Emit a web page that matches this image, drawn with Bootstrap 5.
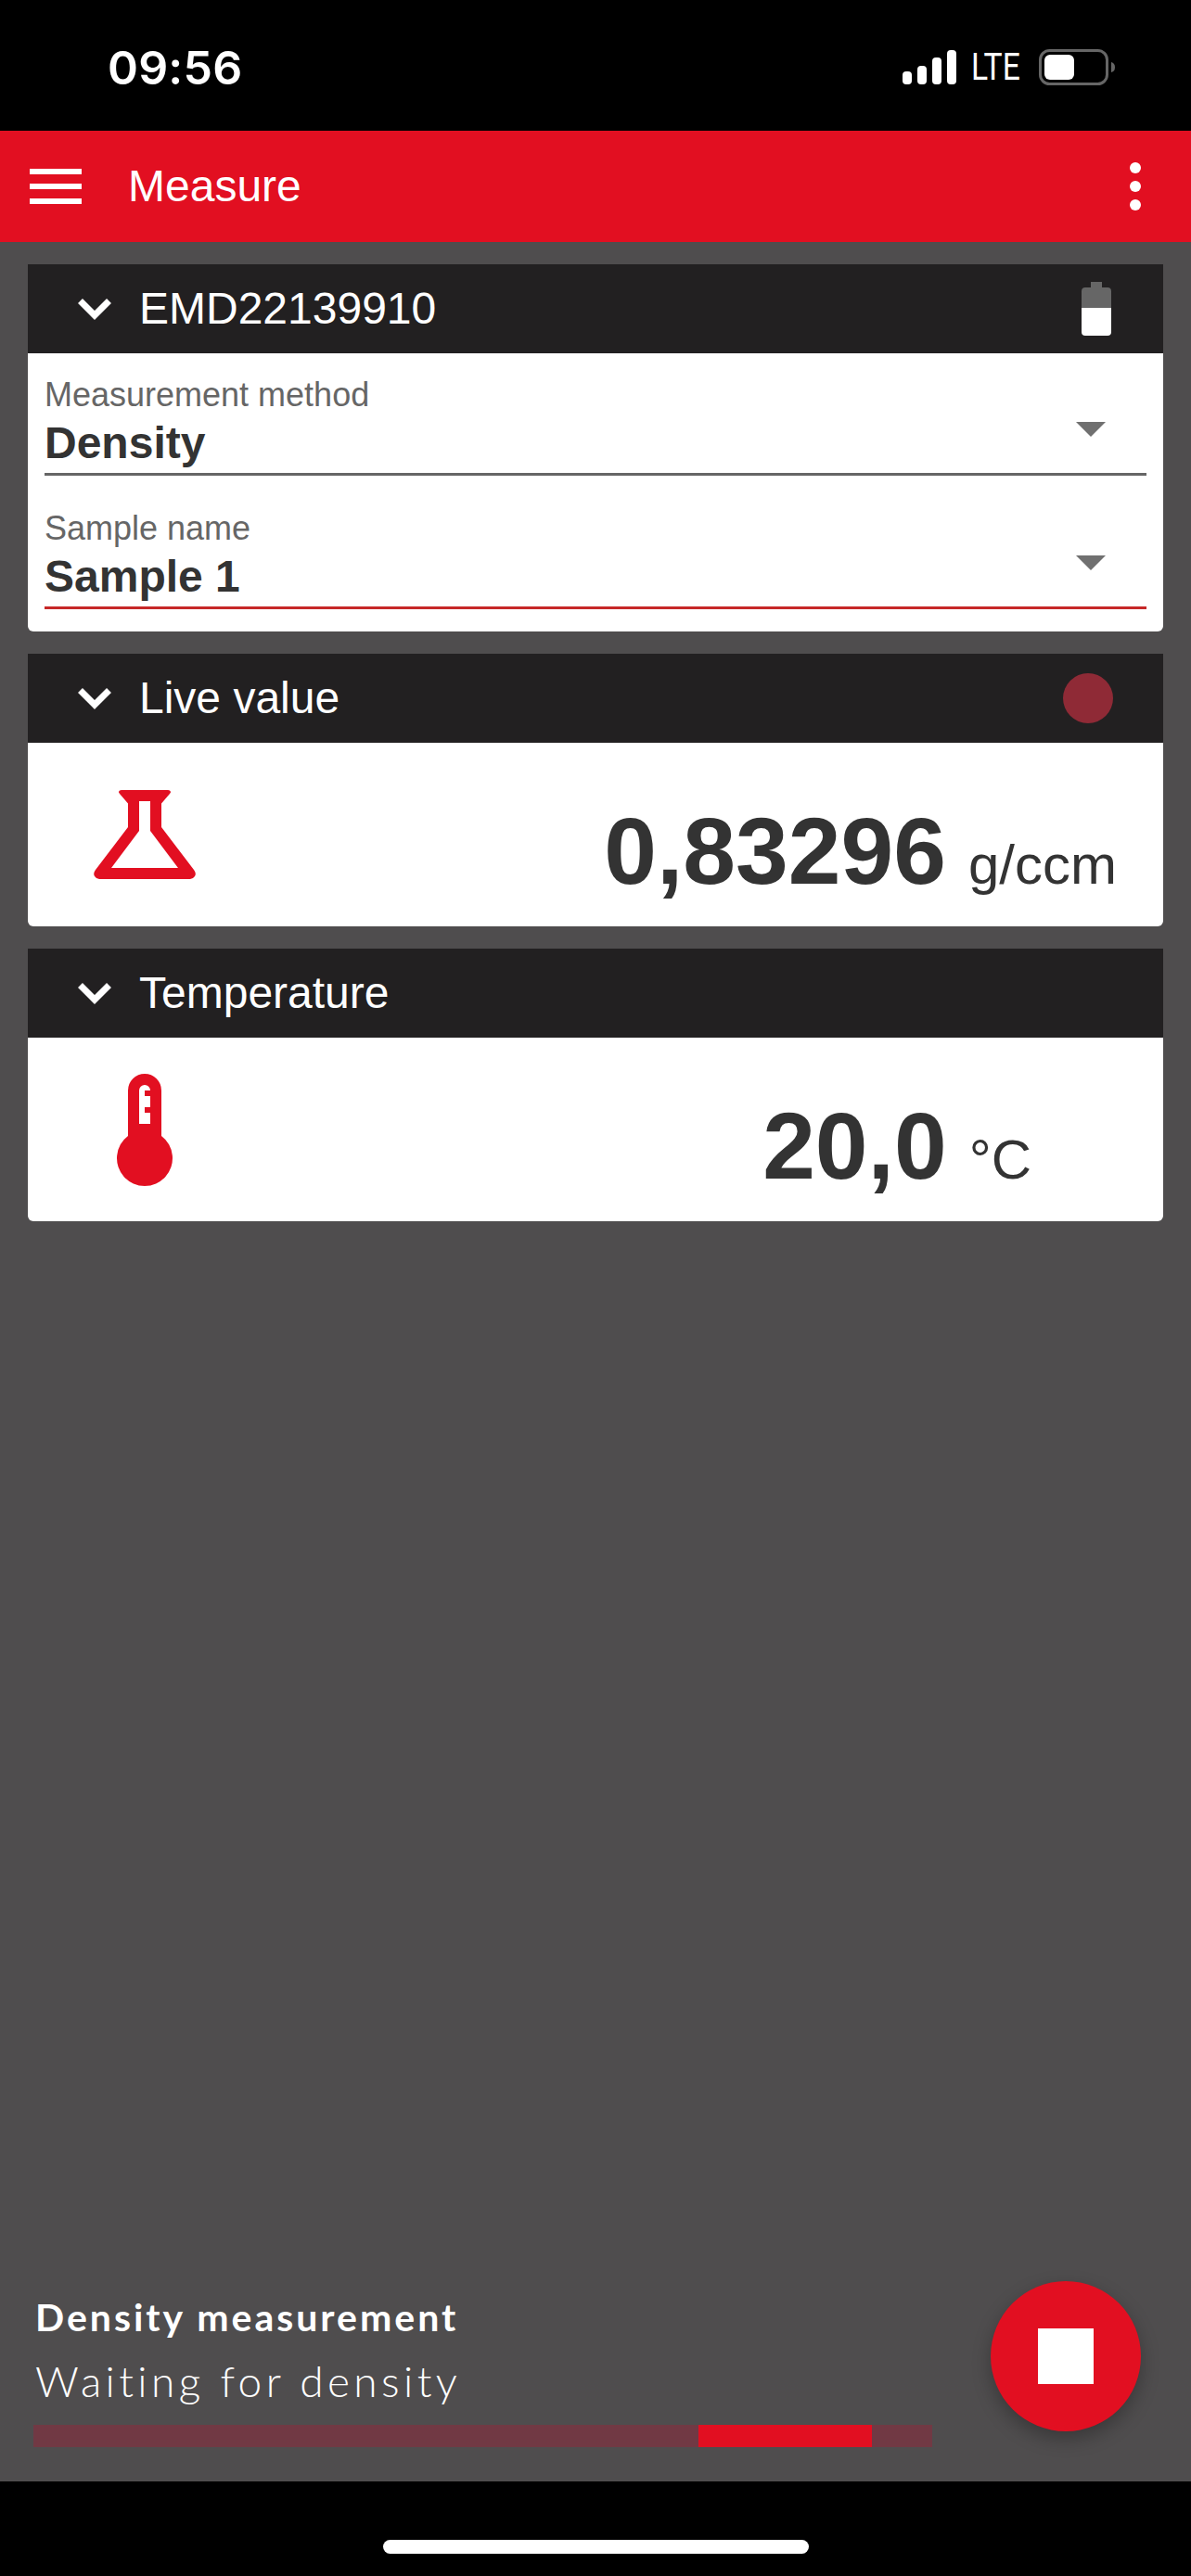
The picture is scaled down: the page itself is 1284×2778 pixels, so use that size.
<!doctype html>
<html lang="en"><head>
<meta charset="utf-8"/><meta name="viewport" content="width=device-width,initial-scale=1"/>
<title>Measure</title>
<link href="https://cdn.jsdelivr.net/npm/bootstrap@5.3.2/dist/css/bootstrap.min.css" rel="stylesheet">
<style>
body{background:#000;font-family:"Liberation Sans",Arial,sans-serif;color:#333}
.phone-status{height:141px;background:#000;color:#fff;padding:0 82px 0 116px}
.clock{font-family:Inter,sans-serif;font-weight:600;font-size:50px;line-height:1;margin-top:5px;letter-spacing:.2px}
.lte-box{width:57px;height:41px}
.lte{display:inline-block;font-family:Roboto,sans-serif;font-weight:400;font-size:41px;line-height:1;transform:scaleX(.82);transform-origin:left center}
.status-icons{gap:16px;margin-top:4px}
.app-bar{height:120px;background:#e20f21;padding:0 32px;color:#fff}
.app-title{font-size:48px;line-height:56px;margin-left:50px}
.burger{width:56px;height:38px;display:flex;flex-direction:column;justify-content:space-between}
.burger span{display:block;height:6px;background:#fff}
.kebab{display:flex;flex-direction:column;gap:8px;margin-right:22px;margin-left:auto}
.kebab span{display:block;width:12px;height:12px;border-radius:50%;background:#fff}
.content-area{background:#4f4d4e;padding:24px 30px 0;gap:24px;flex:1 1 auto}
.panel{border:0;border-radius:6px;background:#fff;color:#333}
.panel-head{height:96px;background:#222021;color:#fff;border:0;border-radius:0!important;padding:0 54px;font-size:48px;line-height:56px}
.panel-head .chev{margin-right:30px;flex:none}
.cell-icon{margin-right:2px}
.panel-body-form{padding:24px 18px}
.field{height:108px;border-bottom:3px solid #666;position:relative}
.field + .field{margin-top:36px}
.field.is-active{border-bottom-color:#c62828}
.field-label{font-size:36px;line-height:36px;color:#666;padding-top:3px}
.field-value{font-size:48px;line-height:56px;font-weight:700;color:#333;margin-top:6px}
.caret-down{position:absolute;right:44px;top:50px;width:0;height:0;border-left:16px solid transparent;border-right:16px solid transparent;border-top:16px solid #707070}
.live-dot{width:54px;height:54px;border-radius:50%;background:#8f2a36}
.reading{height:198px;padding:0 50px 30px 0}
.reading-temp{padding-right:142px}
.reading-num{font-size:102px;line-height:1;font-weight:700}
.reading-unit{font-size:60px;line-height:1;margin-left:24px}
.bottom-zone{position:relative;background:#4f4d4e;height:282px;padding:81px 36px 0}
.job-title{font-family:Lato,sans-serif;font-weight:700;font-size:41px;line-height:48px;letter-spacing:3px;color:#fff;padding-left:2px}
.job-state{font-family:Lato,sans-serif;font-weight:300;font-size:46px;line-height:54px;letter-spacing:4.400px;color:#fff;padding-left:2px;margin-top:18px}
.job-bar{width:969px;height:24px;border-radius:0;background:#713944;margin-top:20px}
.job-bar .progress-bar{background:#e20f21}
.stop-fab{position:absolute;left:1068px;top:66px;width:162px;height:162px;border-radius:50%;background:#e20f21;border:0;padding:0;box-shadow:0 8px 20px rgba(0,0,0,.28)}
.stop-fab span{display:block;width:60px;height:60px;background:#fff;margin:0 auto}
.home-zone{height:102px;background:#000;padding-top:63px}
.home-pill{width:459px;height:15px;border-radius:8px;background:#fff}
</style>
</head><body>
<div class="d-flex flex-column min-vh-100">

  <div class="phone-status d-flex align-items-center justify-content-between">
    <div class="clock">09:56</div>
    <div class="status-icons d-flex align-items-center">
      <svg width="58" height="37" viewBox="0 0 58 37" fill="#fff"><rect x="0" y="23" width="10" height="14" rx="4"/><rect x="16" y="17" width="10" height="20" rx="4"/><rect x="32" y="8" width="10" height="29" rx="4"/><rect x="48" y="0" width="10" height="37" rx="4"/></svg>
      <div class="lte-box"><span class="lte">LTE</span></div>
      <svg width="82" height="39" viewBox="0 0 82 39"><rect x="1.500" y="1.500" width="72" height="36" rx="10" fill="none" stroke="#666" stroke-width="3"/><rect x="6" y="6" width="32" height="27" rx="6" fill="#fff"/><path d="M78 14q4 1 4 5.500t-4 5.500z" fill="#666"/></svg>
    </div>
  </div>

  <nav class="navbar app-bar flex-nowrap justify-content-start">
    <div class="burger"><span></span><span></span><span></span></div>
    <div class="app-title">Measure</div>
    <div class="kebab"><span></span><span></span><span></span></div>
  </nav>

  <main class="content-area d-flex flex-column">
    <div class="card panel">
      <div class="card-header panel-head d-flex align-items-center">
        <svg class="chev" width="36" height="24" viewBox="0 0 36 24"><path d="M2.500 3.500L18 19 33.500 3.500" fill="none" stroke="#fff" stroke-width="7"/></svg>
        <span>EMD22139910</span>
        <svg class="cell-icon ms-auto" width="32" height="58" viewBox="0 0 32 58"><path d="M10 0h12v6h6q4 0 4 4v18H0V10q0-4 4-4h6z" fill="#666"/><path d="M0 28h32v26q0 4-4 4H4q-4 0-4-4z" fill="#fff"/></svg>
      </div>
      <div class="panel-body-form">
        <div class="field">
          <div class="field-label">Measurement method</div>
          <div class="field-value">Density</div>
          <span class="caret-down"></span>
        </div>
        <div class="field is-active">
          <div class="field-label">Sample name</div>
          <div class="field-value">Sample 1</div>
          <span class="caret-down"></span>
        </div>
      </div>
    </div>

    <div class="card panel">
      <div class="card-header panel-head d-flex align-items-center">
        <svg class="chev" width="36" height="24" viewBox="0 0 36 24"><path d="M2.500 3.500L18 19 33.500 3.500" fill="none" stroke="#fff" stroke-width="7"/></svg>
        <span>Live value</span>
        <span class="live-dot ms-auto"></span>
      </div>
      <div class="reading d-flex align-items-end position-relative">
        <svg class="position-absolute top-0 start-0" width="240" height="198" viewBox="0 0 240 198"><path fill="#e20f21" fill-rule="evenodd" d="M101 51h50q3 0 3 2.500l-1 1.500-9 10.500V91l35 46q3 4 1 7t-5 3H77q-3 0-5-3t1-7l35-46V65.500l-9-10.500-1-1.500q0-2.500 3-2.500zM120 63v32l-30 40h72l-30-40V63z"/></svg>
        <div class="ms-auto d-flex align-items-baseline"><span class="reading-num">0,83296</span><span class="reading-unit">g/ccm</span></div>
      </div>
    </div>

    <div class="card panel">
      <div class="card-header panel-head d-flex align-items-center">
        <svg class="chev" width="36" height="24" viewBox="0 0 36 24"><path d="M2.500 3.500L18 19 33.500 3.500" fill="none" stroke="#fff" stroke-width="7"/></svg>
        <span>Temperature</span>
      </div>
      <div class="reading reading-temp d-flex align-items-end position-relative">
        <svg class="position-absolute top-0 start-0" width="240" height="198" viewBox="0 0 240 198"><path fill="#e20f21" fill-rule="evenodd" d="M126 39a18 18 0 0 1 18 18v49a30 30 0 1 1-36 0V57a18 18 0 0 1 18-18zM120 57v36h12V81h-6v-6h6V63h-6v-6h6a6 6 0 0 0-12 0z"/></svg>
        <div class="ms-auto d-flex align-items-baseline"><span class="reading-num">20,0</span><span class="reading-unit">°C</span></div>
      </div>
    </div>
  </main>

  <div class="bottom-zone">
    <div class="job-title">Density measurement</div>
    <div class="job-state">Waiting for density</div>
    <div class="progress job-bar">
      <div class="progress-bar" role="progressbar" style="width:187px;margin-left:717px"></div>
    </div>
    <button class="stop-fab d-flex align-items-center" type="button" aria-label="Stop"><span></span></button>
  </div>

  <div class="home-zone"><div class="home-pill mx-auto"></div></div>
</div>
<script src="https://cdn.jsdelivr.net/npm/bootstrap@5.3.2/dist/js/bootstrap.bundle.min.js"></script>
</body></html>
